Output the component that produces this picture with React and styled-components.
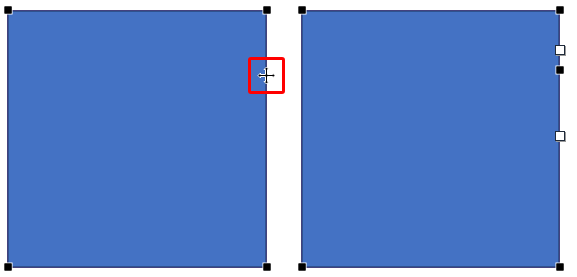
import React from "react";
import styled, { createGlobalStyle, css } from "styled-components";

const Global = createGlobalStyle`
  html, body { margin: 0; padding: 0; background: #ffffff; }
  body { font-family: "Liberation Sans", Arial, sans-serif; }
`;

const Canvas = styled.div`
  width: 577px;
  height: 277px;
  display: flex;
  align-items: flex-start;
  gap: 34px;
  padding: 10px 0 0 7px;
  box-sizing: border-box;
  background: #ffffff;
`;

const Shape = styled.div`
  position: relative;
  width: ${(p) => p.$w}px;
  height: 258px;
  box-sizing: border-box;
  background: #4472c4;
  border: 1px solid #44427e;
  box-shadow: inset 0 0 0 1px #2f528f;
`;

const edge = {
  left: css`left: -1px;`,
  right: css`right: -1px;`,
};

const Handle = styled.div`
  position: absolute;
  ${(p) => edge[p.$side]}
  top: ${(p) => p.$top};
  width: ${(p) => (p.$open ? 10 : 7)}px;
  height: ${(p) => (p.$open ? 10 : 7)}px;
  box-sizing: border-box;
  background: ${(p) => (p.$open ? "#ffffff" : "#000000")};
  border: ${(p) => (p.$open ? "1.5px solid #1f2a3a" : "1px solid #000")};
  box-shadow: ${(p) => (p.$open ? "1px 1px 0 #9a9a9a" : "0 0 0 1px #ffffff")};
  transform: translate(${(p) => (p.$side === "left" ? "-35%" : "50%")}, -50%);
`;

const Highlight = styled.div`
  position: absolute;
  right: -19px;
  top: 46px;
  width: 37px;
  height: 37px;
  box-sizing: border-box;
  border: 3px solid #ff0000;
  border-radius: 3px;
`;

const Cursor = styled.svg`
  position: absolute;
  right: -10px;
  top: 55px;
  width: 19px;
  height: 19px;
`;

function MoveCursor() {
  return (
    <Cursor viewBox="0 0 19 19">
      <path
        d="M9.5 1 L12 3.5 L10.5 3.5 L10.5 8.5 L15.5 8.5 L15.5 7 L18 9.5 L15.5 12 L15.5 10.5 L10.5 10.5 L10.5 15.5 L12 15.5 L9.5 18 L7 15.5 L8.5 15.5 L8.5 10.5 L3.5 10.5 L3.5 12 L1 9.5 L3.5 7 L3.5 8.5 L8.5 8.5 L8.5 3.5 L7 3.5 Z"
        fill="#000"
        stroke="#fff"
        strokeWidth="1"
      />
    </Cursor>
  );
}

function Corners() {
  return (
    <>
      <Handle $side="left" $top="-1px" />
      <Handle $side="right" $top="-1px" />
      <Handle $side="left" $top="100%" />
      <Handle $side="right" $top="100%" />
    </>
  );
}

export default function App() {
  return (
    <>
      <Global />
      <Canvas>
        <Shape $w={260}>
          <Corners />
          <Highlight />
          <MoveCursor />
        </Shape>
        <Shape $w={259}>
          <Corners />
          <Handle $side="right" $top="39px" $open />
          <Handle $side="right" $top="59px" />
          <Handle $side="right" $top="125px" $open />
        </Shape>
      </Canvas>
    </>
  );
}
